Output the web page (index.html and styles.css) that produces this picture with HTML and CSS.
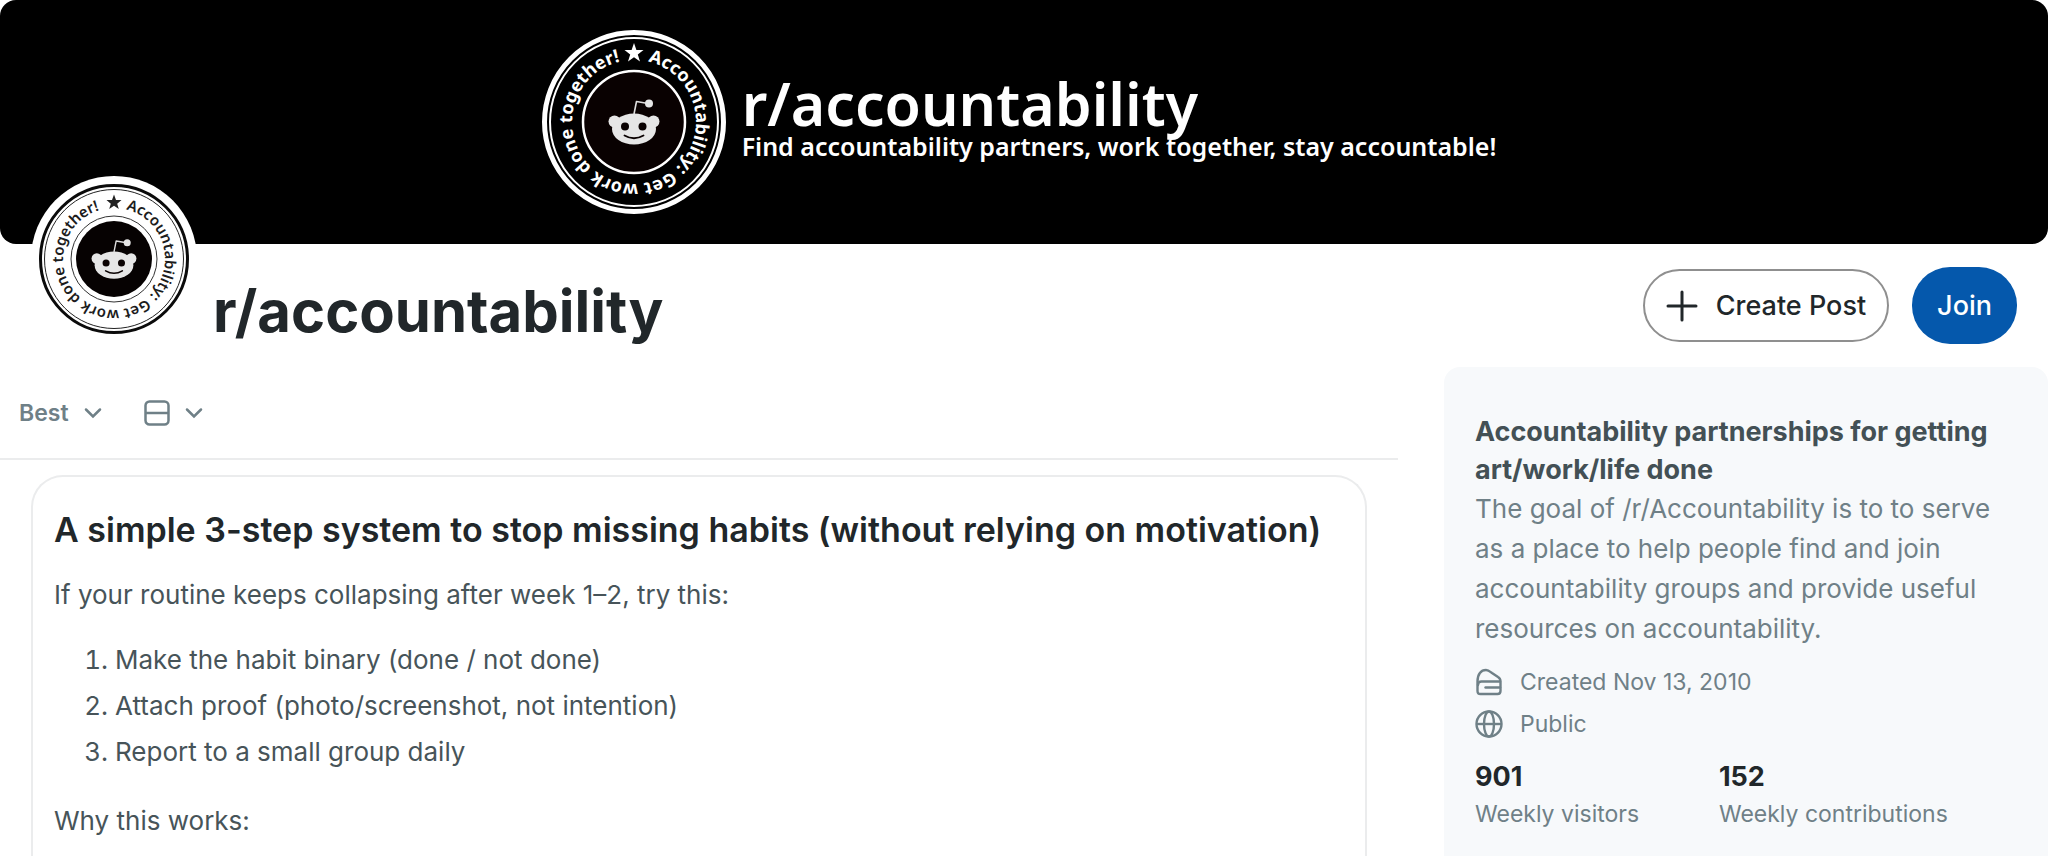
FILE: index.html
```html
<!DOCTYPE html>
<html lang="en">
<head>
<meta charset="utf-8">
<title>r/accountability</title>
<link rel="stylesheet" href="styles.css">
</head>
<body>
<svg class="defs" aria-hidden="true">
  <symbol id="snoo" viewBox="-50 -50 100 100">
    <path d="M0 -8 L2.5 -20.5 L14 -18.5" fill="none" stroke="#dedede" stroke-width="1.6" stroke-linejoin="round"/>
    <circle cx="15" cy="-18.5" r="4" fill="#e6e6e6"/>
    <circle cx="-19.5" cy="-.5" r="6" fill="#e6e6e6"/>
    <circle cx="19.5" cy="-.5" r="6" fill="#e6e6e6"/>
    <ellipse cx="0" cy="7" rx="22" ry="15.5" fill="#e6e6e6"/>
    <circle cx="-9" cy="4.5" r="4" fill="#0a0202"/>
    <circle cx="8.500" cy="4.5" r="4" fill="#0a0202"/>
    <path d="M-9.500 13.500 Q0 19 9.500 13.500" fill="none" stroke="#0a0202" stroke-width="1.800" stroke-linecap="round"/>
  </symbol>
</svg>

<header class="banner">
  <svg class="banner-badge" viewBox="-92 -92 184 184" role="img" aria-label="Community badge">
    <circle r="89.500" fill="#000" stroke="#fff" stroke-width="5"/>
    <circle r="84" fill="none" stroke="#fff" stroke-width="2"/>
    <circle r="51" fill="#090101" stroke="#fff" stroke-width="2.500"/>
    <path id="ring-l" d="M0 -62 A62 62 0 0 1 0 62 A62 62 0 0 1 0 -62" fill="none"/>
    <text class="ring-text ring-text-l" fill="#fff"><textPath href="#ring-l" startOffset="14">Accountability: Get work done together!</textPath></text>
    <path d="M0 -79 L2.400 -72 L9.500 -72 L3.800 -67.500 L6 -60.500 L0 -64.700 L-6 -60.500 L-3.800 -67.500 L-9.500 -72 L-2.400 -72 Z" fill="#fff"/>
    <use href="#snoo" x="-50" y="-50" width="100" height="100"/>
  </svg>
  <div class="banner-copy">
    <p class="banner-name">r/accountability</p>
    <p class="banner-tagline">Find accountability partners, work together, stay accountable!</p>
  </div>
</header>

<section class="identity">
  <svg class="avatar" viewBox="-83 -83 166 166" role="img" aria-label="r/accountability icon">
    <circle r="83" fill="#fff"/>
    <circle r="73.500" fill="#fff" stroke="#0b0b0b" stroke-width="3"/>
    <circle r="69.500" fill="none" stroke="#222" stroke-width="1"/>
    <circle r="43" fill="none" stroke="#333" stroke-width="1"/>
    <circle r="38" fill="#060202"/>
    <path id="ring-s" d="M0 -51 A51 51 0 0 1 0 51 A51 51 0 0 1 0 -51" fill="none"/>
    <text class="ring-text ring-text-s" fill="#1c1c1c"><textPath href="#ring-s" startOffset="12">Accountability: Get work done together!</textPath></text>
    <path d="M0 -64.500 L2 -59 L7.500 -59 L3.200 -55.300 L4.800 -50 L0 -53.200 L-4.800 -50 L-3.200 -55.300 L-7.500 -59 L-2 -59 Z" fill="#222"/>
    <use href="#snoo" x="-44" y="-44" width="88" height="88"/>
  </svg>
  <h1 class="community-name">r/accountability</h1>
  <div class="actions">
    <button class="btn btn-outline" type="button">
      <svg class="icon-plus" viewBox="0 0 32 32" aria-hidden="true"><path d="M16 2V30M2 16H30" fill="none" stroke="currentColor" stroke-width="3" stroke-linecap="round"/></svg>
      Create Post
    </button>
    <button class="btn btn-primary" type="button">Join</button>
  </div>
</section>

<div class="columns">
  <main class="feed">
    <div class="toolbar">
      <button class="tool" type="button">Best
        <svg class="icon-chevron" viewBox="0 0 18 12" aria-hidden="true"><path d="M2 2.500 L9 9.500 L16 2.500" fill="none" stroke="currentColor" stroke-width="2.500" stroke-linecap="round"/></svg>
      </button>
      <button class="tool" type="button" aria-label="View">
        <svg class="icon-view" viewBox="0 0 26 26" aria-hidden="true"><rect x="1.500" y="1.500" width="23" height="23" rx="4" fill="none" stroke="currentColor" stroke-width="2.500"/><path d="M2 13H24" stroke="currentColor" stroke-width="2.500"/></svg>
        <svg class="icon-chevron" viewBox="0 0 18 12" aria-hidden="true"><path d="M2 2.500 L9 9.500 L16 2.500" fill="none" stroke="currentColor" stroke-width="2.500" stroke-linecap="round"/></svg>
      </button>
    </div>
    <article class="post">
      <h2 class="post-title">A simple 3-step system to stop missing habits (without relying on motivation)</h2>
      <p class="post-text">If your routine keeps collapsing after week 1–2, try this:</p>
      <ol class="post-list">
        <li>Make the habit binary (done / not done)</li>
        <li>Attach proof (photo/screenshot, not intention)</li>
        <li>Report to a small group daily</li>
      </ol>
      <p class="post-text">Why this works:</p>
    </article>
  </main>

  <aside class="about">
    <h2 class="about-title">Accountability partnerships for getting art/work/life done</h2>
    <p class="about-text">The goal of /r/Accountability is to to serve as a place to help people find and join accountability groups and provide useful resources on accountability.</p>
    <ul class="facts">
      <li class="fact">
        <svg class="icon-fact" viewBox="0 0 28 28" aria-hidden="true"><g fill="none" stroke="currentColor" stroke-width="2.400" stroke-linejoin="round" stroke-linecap="round"><path d="M2.500 13.500 C2.500 6 6 2 11 2 C13.500 2 15 3.500 17 5 L23 9 Q25.500 10.500 25.500 13.500 V23 Q25.500 26 22.500 26 H5.500 Q2.500 26 2.500 23 Z"/><path d="M3 17 Q3 13.500 6.500 13.500 H25"/><path d="M10.500 19.500 H25"/></g></svg>
        Created Nov 13, 2010
      </li>
      <li class="fact">
        <svg class="icon-fact" viewBox="0 0 28 28" aria-hidden="true"><g fill="none" stroke="currentColor" stroke-width="2.400"><circle cx="14" cy="14" r="12.500"/><ellipse cx="14" cy="14" rx="5" ry="12.500"/><path d="M1.500 14H26.500"/></g></svg>
        Public
      </li>
    </ul>
    <dl class="stats">
      <div class="stat"><dt>Weekly visitors</dt><dd>901</dd></div>
      <div class="stat"><dt>Weekly contributions</dt><dd>152</dd></div>
    </dl>
  </aside>
</div>
</body>
</html>
```
FILE: styles.css
```css
* {
  box-sizing: border-box;
}

body {
  margin: 0;
  background: #fff;
  color: #21272a;
  font-family: Inter, "Liberation Sans", sans-serif;
}

h1, h2, p, ol, ul, dl, dd {
  margin: 0;
  padding: 0;
}

button {
  font: inherit;
  cursor: pointer;
}

.defs {
  display: none;
}

.banner {
  display: flex;
  justify-content: center;
  align-items: center;
  gap: 16px;
  height: 244px;
  padding-right: 10px;
  border-radius: 16px;
  background: #000;
  color: #fff;
  font-family: "Noto Sans", sans-serif;
}

.banner-badge {
  width: 184px;
  height: 184px;
}

.banner-copy {
  padding-bottom: 8px;
}

.banner-name {
  font-size: 59px;
  font-weight: 600;
  line-height: 56px;
}

.banner-tagline {
  font-size: 25px;
  font-weight: 600;
  line-height: 30px;
}

.ring-text {
  font-family: "Noto Sans", sans-serif;
  font-weight: 600;
}

.ring-text-l {
  font-size: 18px;
  font-weight: 700;
}

.ring-text-s {
  font-size: 15px;
}

.identity {
  display: flex;
  align-items: center;
  height: 123px;
  padding: 0 31px;
}

.avatar {
  flex: none;
  align-self: flex-end;
  width: 166px;
  height: 166px;
  margin-bottom: 25px;
}

.community-name {
  margin-left: 16px;
  padding-top: 10px;
  font-size: 58px;
  font-weight: 700;
  line-height: 64px;
}

.actions {
  display: flex;
  align-items: center;
  gap: 23px;
  margin-left: auto;
}

.btn {
  display: flex;
  align-items: center;
  border-radius: 38px;
  font-size: 27px;
  font-weight: 500;
}

.btn-outline {
  gap: 18px;
  height: 73px;
  padding: 0 21px;
  border: 2px solid #8f8f8f;
  background: #fff;
  color: #21272a;
}

.btn-primary {
  height: 77px;
  padding: 0 25px;
  border: 0;
  background: #0558ac;
  color: #fff;
}

.icon-plus {
  width: 32px;
  height: 32px;
}

.columns {
  display: grid;
  grid-template-columns: minmax(0, 1fr) 604px;
  gap: 46px;
}

.toolbar {
  display: flex;
  align-items: center;
  gap: 42px;
  height: 93px;
  padding: 0 19px;
  border-bottom: 2px solid #ebeced;
}

.tool {
  display: flex;
  align-items: center;
  gap: 15px;
  padding: 0;
  border: 0;
  background: none;
  color: #6f8087;
  font-size: 23px;
  font-weight: 600;
}

.icon-chevron {
  width: 18px;
  height: 12px;
}

.icon-view {
  width: 26px;
  height: 26px;
}

.post {
  margin: 15px 31px 0;
  padding: 31px 21px;
  border: 2px solid #ebeced;
  border-bottom: 0;
  border-radius: 32px 32px 0 0;
}

.post-title {
  font-size: 34px;
  font-weight: 600;
  line-height: 44px;
}

.post-text,
.post-list {
  color: #475459;
  font-size: 26px;
  line-height: 46px;
}

.post-title + .post-text {
  margin-top: 20px;
}

.post-list {
  margin: 19px 0 23px;
  padding-left: 61px;
}

.about {
  padding: 46px 31px;
  border-radius: 16px 16px 0 0;
  background: #f7f9fb;
  color: #6f8087;
}

.about-title {
  color: #435055;
  font-size: 27px;
  font-weight: 700;
  line-height: 38px;
}

.about-text {
  font-size: 26px;
  line-height: 40px;
}

.facts {
  display: grid;
  gap: 10px;
  margin-top: 17px;
  list-style: none;
}

.fact {
  display: flex;
  align-items: center;
  gap: 17px;
  font-size: 23px;
  line-height: 32px;
}

.icon-fact {
  width: 28px;
  height: 28px;
}

.stats {
  display: grid;
  grid-template-columns: 9fr 11fr;
  margin-top: 17px;
}

.stat {
  display: flex;
  flex-direction: column-reverse;
}

.stat dt {
  font-size: 23px;
  line-height: 34px;
}

.stat dd {
  color: #21272a;
  font-size: 27px;
  font-weight: 700;
  line-height: 40px;
}
```
